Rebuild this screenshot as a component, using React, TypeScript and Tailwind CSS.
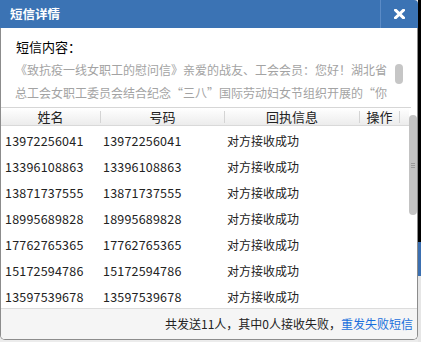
import React from "react";

const rows = [
  "13972256041",
  "13396108863",
  "13871737555",
  "18995689828",
  "17762765365",
  "15172594786",
  "13597539678",
];

const font = { fontFamily: '"Noto Sans CJK SC", "Noto Sans", sans-serif' };

function HeaderCell({ label, width }: { label: string; width: string }) {
  return (
    <div className={`flex items-center ${width}`}>
      <span className="flex-1 text-center">{label}</span>
      <span className="h-[12px] w-px bg-[#d4d4d4]" />
    </div>
  );
}

export default function App() {
  return (
    <div
      className="flex w-[421px] h-[342px] bg-[#ececec] text-[12px] text-[#222]"
      style={font}
    >
      <div className="flex flex-col w-[418px] h-[340px] rounded-tr-[4px] overflow-hidden">
        {/* Title bar */}
        <div className="flex items-stretch h-[28px] bg-[#3b73b4]">
          <div className="flex-1 flex items-center pl-[10px] text-[12.5px] font-bold text-white">
            短信详情
          </div>
          <div className="w-[38px] flex items-center justify-center border-l border-[#5b8bc6]">
            <svg width="11" height="10" viewBox="0 0 11 10">
              <path
                d="M1.5 1.2 L9.5 8.8 M9.5 1.2 L1.5 8.8"
                stroke="#fff"
                strokeWidth="3"
                strokeLinecap="square"
              />
            </svg>
          </div>
        </div>

        {/* Body */}
        <div className="flex-1 flex flex-col bg-white border-x border-b border-[#8c8c8c] rounded-b-[5px] overflow-hidden">
          {/* Message content */}
          <div className="pt-[9px] pb-[3px] mr-[6px] border-b border-[#d6d6d6]">
            <div className="pl-[15px] leading-[20px] text-[13px] text-black">
              短信内容：
            </div>
            <div className="flex mt-[1px]">
              <div className="w-[394px] pl-[14px] h-[46px] overflow-hidden leading-[23px] text-[#a3a3a3]">
                《致抗疫一线女职工的慰问信》亲爱的战友、工会会员：您好！湖北省总工会女职工委员会结合纪念“三八”国际劳动妇女节组织开展的“你我同行，共同战疫”主题活动，向奋战在抗疫一线的女职工致以崇高的敬意和诚挚的问候！
              </div>
              <div className="w-[8px] pt-[6px]">
                <div className="h-[20px] rounded-full bg-[#c6c6c6]" />
              </div>
            </div>
          </div>

          {/* Table */}
          <div className="flex h-[200px]">
            <div className="w-[408px] flex flex-col overflow-hidden">
              <div className="flex h-[18px] shrink-0 border-b border-[#d9d9d9] bg-gradient-to-b from-white to-[#ececec] text-[13px] text-[#222] leading-[17px]">
                <HeaderCell label="姓名" width="w-[100px]" />
                <HeaderCell label="号码" width="w-[124px]" />
                <HeaderCell label="回执信息" width="w-[135px]" />
                <HeaderCell label="操作" width="w-[40px]" />
                <div className="flex-1" />
              </div>
              <div className="pt-[2px]">
                {rows.map((n) => (
                  <div key={n} className="flex h-[26px] items-center text-[12.5px]">
                    <div className="w-[100px] pl-[4px] tracking-[0.2px]">{n}</div>
                    <div className="w-[124px] pl-[2px] tracking-[0.2px]">{n}</div>
                    <div className="w-[135px] pl-[2px] text-[12px]">对方接收成功</div>
                  </div>
                ))}
              </div>
            </div>
            <div className="w-[8px] pt-[7px]">
              <div className="h-[100px] rounded-full bg-[#c3c3c3] flex flex-col items-center justify-center gap-[1px]">
                <span className="w-[4px] h-px bg-[#9a9a9a]" />
                <span className="w-[4px] h-px bg-[#9a9a9a]" />
                <span className="w-[4px] h-px bg-[#9a9a9a]" />
              </div>
            </div>
          </div>

          {/* Footer */}
          <div className="flex-1 flex items-center justify-end pr-[4px] border-t border-[#dcdcdc] bg-[#f5f5f5] text-[12px] text-[#222]">
            共发送11人，其中0人接收失败，
            <span className="text-[#1a6fdc]">重发失败短信</span>
          </div>
        </div>
      </div>

      {/* Backdrop strip on the right */}
      <div className="flex flex-col w-[3px]">
        <div className="h-[242px] bg-black" />
        <div className="h-[34px] bg-[#3b6fb0]" />
        <div className="flex-1 bg-[#e6e6e6]" />
      </div>
    </div>
  );
}
